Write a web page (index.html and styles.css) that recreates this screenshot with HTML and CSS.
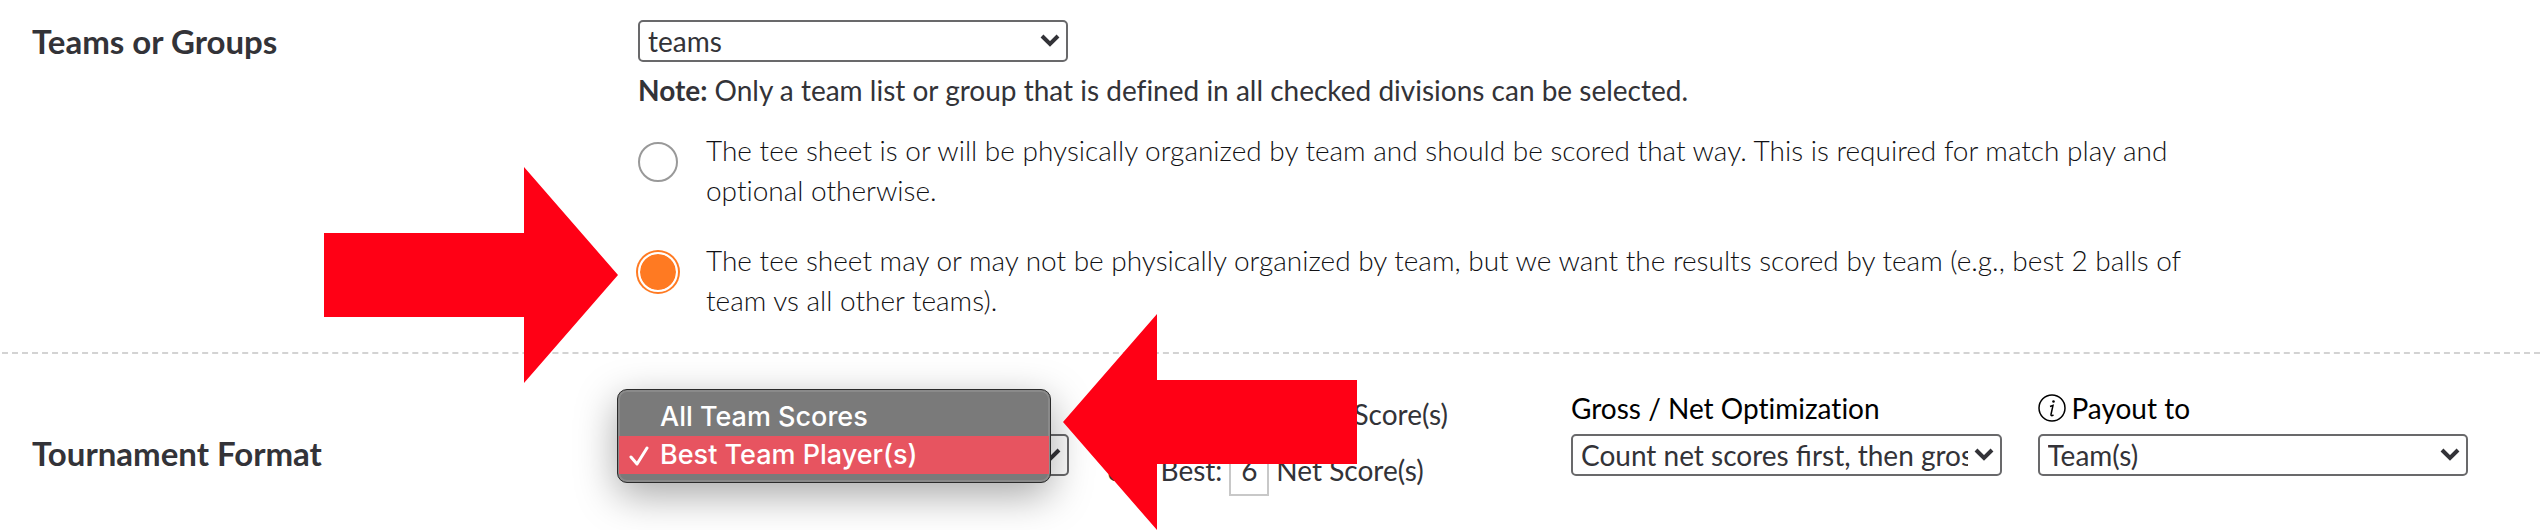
FILE: index.html
```html
<!DOCTYPE html>
<html lang="en">
<head>
    <meta charset="UTF-8">
    <meta name="viewport" content="width=device-width, initial-scale=1.0">
    <title>Tournament Settings</title>
    <link rel="stylesheet" href="styles.css">
</head>
<body>

<form class="settings">
    <section class="row teams-row">
        <h2><label for="teamList">Teams or Groups</label></h2>
        <div class="row-content">
            <div class="select-box team-select">
                <select id="teamList">
                    <option>teams</option>
                </select>
                <svg class="chevron" viewBox="0 0 20 14"><path d="M2 3l8 8 8-8"/></svg>
            </div>
            <p class="note"><b>Note:</b> Only a team list or group that is defined in all checked divisions can be selected.</p>
            <div class="option">
                <input type="radio" name="organized" id="byTeam">
                <label for="byTeam">The tee sheet is or will be physically organized by team and should be scored that way. This is required for match play and optional otherwise.</label>
            </div>
            <div class="option">
                <input type="radio" name="organized" id="notByTeam" checked>
                <label for="notByTeam">The tee sheet may or may not be physically organized by team, but we want the results scored by team (e.g., best 2 balls of team vs all other teams).</label>
            </div>
        </div>
        <svg class="arrow arrow-right" viewBox="0 0 294 216"><path d="M0 66h200V0l94 108-94 108v-66H0z"/></svg>
    </section>

    <section class="row format-row">
        <h2><label for="format">Tournament Format</label></h2>
        <div class="fields">
            <div class="field format-field">
                <div class="select-box">
                    <select id="format">
                        <option>Best Team Player(s)</option>
                        <option>All Team Scores</option>
                    </select>
                    <svg class="chevron" viewBox="0 0 20 14"><path d="M2 3l8 8 8-8"/></svg>
                </div>
                <ul class="menu" role="listbox" aria-label="Tournament Format">
                    <li role="option" aria-selected="false">All Team Scores</li>
                    <li role="option" aria-selected="true" class="selected">
                        <svg class="check" viewBox="0 0 20 20"><path d="M2 11l6 7L18 2"/></svg>Best Team Player(s)
                    </li>
                </ul>
                <svg class="arrow arrow-left" viewBox="0 0 294 216"><path d="M294 66H94V0L0 108l94 108v-66h200z"/></svg>
            </div>
            <div class="field scores">
                <span></span>
                <label for="grossScores">Best:</label>
                <input type="text" id="grossScores" value="6">
                <span>Gross Score(s)</span>
                <span>or</span>
                <label for="netScores">Best:</label>
                <input type="text" id="netScores" value="6">
                <span>Net Score(s)</span>
            </div>
            <div class="field">
                <label class="field-label" for="optimization">Gross / Net Optimization</label>
                <div class="select-box">
                    <select id="optimization">
                        <option>Count net scores first, then gross</option>
                    </select>
                    <svg class="chevron" viewBox="0 0 20 14"><path d="M2 3l8 8 8-8"/></svg>
                </div>
            </div>
            <div class="field">
                <label class="field-label" for="payout">
                    <svg class="info" viewBox="0 0 28 28"><circle cx="14" cy="14" r="13"/><path d="M12 12.500q1.500-.500 3-1l-2 9q-.300 2 2.500.500"/><circle class="dot" cx="15.500" cy="7.500" r="1.300"/></svg>
                    Payout to
                </label>
                <div class="select-box">
                    <select id="payout">
                        <option>Team(s)</option>
                    </select>
                    <svg class="chevron" viewBox="0 0 20 14"><path d="M2 3l8 8 8-8"/></svg>
                </div>
            </div>
        </div>
    </section>
</form>

</body>
</html>
```

FILE: styles.css
```css
* {
    box-sizing: border-box;
    margin: 0;
    padding: 0;
}

body {
    background-color: #fff;
    color: #333338;
    font-family: Lato, sans-serif;
    font-size: 28px;
    line-height: 40px;
    font-variant-ligatures: none;
}

.settings {
    margin-left: 2px;
    overflow: hidden;
}

.row {
    display: grid;
    grid-template-columns: 606px 1fr;
    padding-left: 30px;
    position: relative;
}

.teams-row {
    padding-top: 20px;
    padding-bottom: 32px;
    border-bottom: 2px dashed #d3d3d3;
}

.format-row {
    padding: 34px 72px 34px 30px;
}

h2 {
    font-size: 33px;
    font-weight: bold;
    line-height: 42px;
}

.format-row h2 {
    padding-top: 44px;
}

/* selects */
.select-box {
    position: relative;
}

.team-select {
    width: 430px;
}

select {
    display: block;
    width: 100%;
    height: 42px;
    padding: 0 32px 0 8px;
    appearance: none;
    background-color: white;
    border: 2px solid #69696b;
    border-radius: 5px;
    color: #333338;
    font-family: inherit;
    font-size: 28px;
}

.chevron {
    position: absolute;
    top: 13px;
    right: 8px;
    width: 20px;
    height: 14px;
    fill: none;
    stroke: #333338;
    stroke-width: 4;
    pointer-events: none;
}

.note {
    margin: 8px 0 20px;
}

/* radio options */
.option {
    display: flex;
    gap: 28px;
    max-width: 1570px;
    color: #111114;
    font-weight: 300;
}

.option + .option {
    margin-top: 30px;
}

.option input {
    flex: none;
    width: 40px;
    height: 40px;
    margin-top: 12px;
    appearance: none;
    border: 2px solid #999;
    border-radius: 50%;
}

.option input:checked {
    background: #ff7a22 padding-box;
    border-color: white;
    box-shadow: 0 0 0 2px #ff7a22;
}

/* tournament format fields */
.fields {
    display: grid;
    grid-template-columns: repeat(4, 1fr);
    gap: 36px;
    align-items: start;
}

.field {
    position: relative;
    min-width: 0;
}

.format-field {
    padding-top: 46px;
}

.field-label {
    display: flex;
    align-items: center;
    gap: 6px;
    margin-bottom: 6px;
    color: black;
}

.info {
    width: 28px;
    height: 28px;
    fill: none;
    stroke: black;
    stroke-width: 1.5;
}

.info .dot {
    fill: black;
    stroke: none;
}

.scores {
    display: grid;
    grid-template-columns: 46px auto 40px 1fr;
    gap: 4px 7px;
    align-items: center;
    padding-left: 3px;
}

.scores input {
    width: 40px;
    height: 52px;
    border: 2px solid #c8c8c8;
    color: #333338;
    font-family: inherit;
    font-size: 28px;
    text-align: center;
}

/* open drop-down list */
.menu {
    position: absolute;
    top: 1px;
    left: -21px;
    z-index: 1;
    width: 434px;
    padding: 8px 1px;
    list-style: none;
    background-color: #7a7a7a;
    border: 1px solid #2b2b2b;
    border-radius: 10px;
    box-shadow: inset 0 0 0 2px #8a8a8a, 0 12px 40px rgba(0, 0, 0, 0.35);
    color: white;
    font-family: Inter, sans-serif;
    font-size: 27px;
    font-weight: 500;
    line-height: 38px;
}

.menu li {
    position: relative;
    padding-left: 41px;
}

.menu .selected {
    background-color: #e75460;
}

.check {
    position: absolute;
    top: 10px;
    left: 10px;
    width: 20px;
    height: 20px;
    fill: none;
    stroke: white;
    stroke-width: 3;
    stroke-linecap: round;
    stroke-linejoin: round;
}

/* callout arrows */
.arrow {
    position: absolute;
    z-index: 2;
    width: 294px;
    height: 216px;
    fill: #ff0015;
}

.arrow-right {
    top: 167px;
    left: 322px;
}

.arrow-left {
    top: -74px;
    left: 425px;
}
```
